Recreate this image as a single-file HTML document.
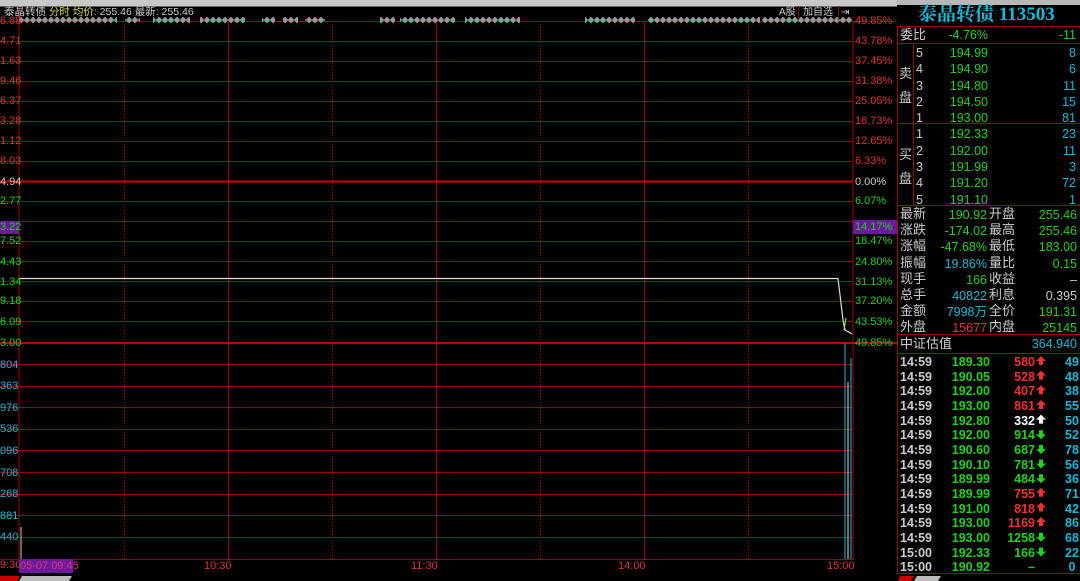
<!DOCTYPE html>
<html><head><meta charset="utf-8"><style>
body{margin:0;width:1080px;height:581px;background:#000;overflow:hidden;position:relative;font-family:"Liberation Sans","Noto Sans CJK SC",sans-serif;}
.a{position:absolute;white-space:nowrap;line-height:1;}
.l{font-size:11px;color:#d33;}
.r{text-align:right;}
.p{font-size:12.5px;}
.g{color:#1fd11f}.c{color:#1ab8d8}.w{color:#ccc}.rd{color:#f03030}
</style></head><body>
<div class="a" style="left:0;top:0;width:1080px;height:5px;background:#b8b8b8"></div>
<div class="a" style="left:0;top:0;width:897px;height:6px;background:#c8c8c8;border-bottom:1px solid #666"></div>
<svg class="a" style="left:0;top:0" width="1080" height="581">
<defs><pattern id="dm" x="0" y="0" width="6" height="8" patternUnits="userSpaceOnUse"><path d="M3 0.5L6.2 4 3 7.5 -0.2 4Z" fill="#909a9a"/></pattern></defs>
<g stroke="#a00000" stroke-width="1">
<line x1="19" y1="6" x2="19" y2="560"/>
<line x1="853" y1="21" x2="853" y2="560"/>
<line x1="228.5" y1="21" x2="228.5" y2="560"/><line x1="436.5" y1="21" x2="436.5" y2="560"/><line x1="644.5" y1="21" x2="644.5" y2="560"/>
<g stroke-dasharray="1,2"><line x1="124.5" y1="21" x2="124.5" y2="560"/><line x1="332.5" y1="21" x2="332.5" y2="560"/><line x1="540.5" y1="21" x2="540.5" y2="560"/><line x1="748.5" y1="21" x2="748.5" y2="560"/></g>
<line x1="0" y1="21.5" x2="897" y2="21.5"/>
<line x1="0" y1="41.5" x2="853" y2="41.5"/><line x1="0" y1="61.5" x2="853" y2="61.5"/><line x1="0" y1="81.5" x2="853" y2="81.5"/><line x1="0" y1="101.5" x2="853" y2="101.5"/><line x1="0" y1="121.5" x2="853" y2="121.5"/><line x1="0" y1="141.5" x2="853" y2="141.5"/><line x1="0" y1="161.5" x2="853" y2="161.5"/>
<line x1="0" y1="181.5" x2="853" y2="181.5" stroke="#d00000" stroke-width="2"/>
<line x1="0" y1="201.5" x2="853" y2="201.5"/><line x1="0" y1="221.5" x2="853" y2="221.5"/><line x1="0" y1="241.5" x2="853" y2="241.5"/><line x1="0" y1="261.5" x2="853" y2="261.5"/><line x1="0" y1="281.5" x2="853" y2="281.5"/><line x1="0" y1="301.5" x2="853" y2="301.5"/><line x1="0" y1="321.5" x2="853" y2="321.5"/>
<line x1="0" y1="343" x2="897" y2="343" stroke="#c00000" stroke-width="2"/>
<line x1="0" y1="364.5" x2="853" y2="364.5"/><line x1="0" y1="386.5" x2="853" y2="386.5"/><line x1="0" y1="407.5" x2="853" y2="407.5"/><line x1="0" y1="429.5" x2="853" y2="429.5"/><line x1="0" y1="450.5" x2="853" y2="450.5"/><line x1="0" y1="472.5" x2="853" y2="472.5"/><line x1="0" y1="494.5" x2="853" y2="494.5"/><line x1="0" y1="515.5" x2="853" y2="515.5"/><line x1="0" y1="537.5" x2="853" y2="537.5"/>
<line x1="0" y1="559.5" x2="853" y2="559.5"/>
<line x1="897.5" y1="26" x2="897.5" y2="574"/>
<line x1="897" y1="26.5" x2="1080" y2="26.5"/><line x1="897" y1="43.5" x2="1080" y2="43.5"/><line x1="897" y1="123.5" x2="1080" y2="123.5"/><line x1="897" y1="205.5" x2="1080" y2="205.5"/><line x1="897" y1="334.5" x2="1080" y2="334.5"/><line x1="897" y1="353.5" x2="1080" y2="353.5"/><line x1="897" y1="573.5" x2="1080" y2="573.5"/>
<line x1="913.5" y1="43" x2="913.5" y2="205"/>
</g>
<g fill="url(#dm)">
<rect x="19" y="17" width="98" height="8"/><rect x="125" y="17" width="15" height="8"/><rect x="153" y="17" width="37" height="8"/><rect x="200" y="17" width="45" height="8"/><rect x="262" y="17" width="13" height="8"/><rect x="283" y="17" width="15" height="8"/><rect x="305" y="17" width="20" height="8"/><rect x="380" y="17" width="15" height="8"/><rect x="400" y="17" width="55" height="8"/><rect x="465" y="17" width="55" height="8"/><rect x="585" y="17" width="50" height="8"/><rect x="648" y="17" width="112" height="8"/><rect x="762" y="17" width="90" height="8"/>
</g>
<polyline points="19,278.5 838,278.5 840,295 843,320 845,330 852,334" fill="none" stroke="#ddd" stroke-width="1.2"/>
<line x1="844" y1="330" x2="846" y2="318" stroke="#dd4" stroke-width="1"/>
<line x1="21" y1="527" x2="21" y2="559" stroke="#ccc"/>
<line x1="845" y1="343" x2="845" y2="559" stroke="#1ab8d8"/><line x1="848" y1="382" x2="848" y2="559" stroke="#ddd"/><line x1="851" y1="358" x2="851" y2="559" stroke="#1ab8d8"/>
<g fill="#f03030">
<path d="M1041 356l5 5h-3v4h-4v-4h-3z"/><path d="M1041 370.6l5 5h-3v4h-4v-4h-3z"/><path d="M1041 385.3l5 5h-3v4h-4v-4h-3z"/><path d="M1041 400l5 5h-3v4h-4v-4h-3z"/>
<path d="M1041 487.8l5 5h-3v4h-4v-4h-3z"/><path d="M1041 502.5l5 5h-3v4h-4v-4h-3z"/><path d="M1041 517l5 5h-3v4h-4v-4h-3z"/></g>
<path d="M1041 414.6l5 5h-3v4h-4v-4h-3z" fill="#fff"/>
<g fill="#1fd11f">
<path d="M1041 439.3l5-5h-3v-4h-4v4h-3z"/><path d="M1041 454l5-5h-3v-4h-4v4h-3z"/><path d="M1041 468.5l5-5h-3v-4h-4v4h-3z"/><path d="M1041 483.2l5-5h-3v-4h-4v4h-3z"/>
<path d="M1041 541.8l5-5h-3v-4h-4v4h-3z"/><path d="M1041 556.5l5-5h-3v-4h-4v4h-3z"/></g>
<path d="M900 576h14l-3 5h-13z" fill="#c00"/><path d="M917 576h24l-3 5h-24z" fill="#bbb"/>
<path d="M0 576h20l-3 5h-17z" fill="#c00"/><path d="M22 576h50l-3 5h-50z" fill="#bbb"/>
</svg>
<div class="a" style="left:4px;top:7px;font-size:10.5px;color:#ccc">泰晶转债 <span style="color:#dd4">分时 均价:</span> 255.46 最新: 255.46</div>
<div class="a" style="left:779px;top:6px;width:19px;height:14px;border-right:1px solid #800;font-size:10px;color:#ccc;line-height:14px">A股</div>
<div class="a" style="left:803px;top:6px;font-size:10px;color:#ccc;line-height:14px">加自选</div>
<div class="a" style="left:838px;top:6px;font-size:10px;color:#ccc;line-height:14px;border-left:1px solid #800;padding-left:2px">⇥</div>
<div class="a l" style="left:0;top:16px">6.88</div><div class="a l" style="left:0;top:36px">4.71</div><div class="a l" style="left:0;top:56px">1.63</div><div class="a l" style="left:0;top:76px">9.46</div><div class="a l" style="left:0;top:96px">6.37</div><div class="a l" style="left:0;top:116px">3.28</div><div class="a l" style="left:0;top:136px">1.12</div><div class="a l" style="left:0;top:156px">8.03</div>
<div class="a l" style="left:0;top:177px;color:#ccc">4.94</div>
<div class="a l g" style="left:0;top:196px">2.77</div><div class="a" style="left:0;top:221px;width:19px;height:13px;background:#6a1a9a"></div><div class="a l g" style="left:0;top:222px">3.22</div><div class="a l g" style="left:0;top:236px">7.52</div><div class="a l g" style="left:0;top:257px">4.43</div><div class="a l g" style="left:0;top:277px">1.34</div><div class="a l g" style="left:0;top:296px">9.18</div><div class="a l g" style="left:0;top:317px">6.09</div><div class="a l g" style="left:0;top:338px">3.00</div>
<div class="a l c" style="left:0;top:360px">804</div><div class="a l c" style="left:0;top:381px">363</div><div class="a l c" style="left:0;top:403px">976</div><div class="a l c" style="left:0;top:424px">536</div><div class="a l c" style="left:0;top:446px">096</div><div class="a l c" style="left:0;top:468px">708</div><div class="a l c" style="left:0;top:489px">268</div><div class="a l c" style="left:0;top:511px">881</div><div class="a l c" style="left:0;top:532px">440</div>
<div class="a l" style="left:0;top:560px">9:30</div>
<div class="a" style="left:19px;top:559px;width:54px;height:14px;background:#6a1a9a"></div>
<div class="a l" style="left:20px;top:561px;color:#e03080">05-07 09:45</div>
<div class="a l" style="left:204px;top:561px">10:30</div><div class="a l" style="left:411px;top:561px">11:30</div><div class="a l" style="left:618px;top:561px">14:00</div><div class="a l" style="left:827px;top:561px">15:00</div>
<div class="a l" style="left:855px;top:16px">49.85%</div><div class="a l" style="left:855px;top:36px">43.78%</div><div class="a l" style="left:855px;top:56px">37.45%</div><div class="a l" style="left:855px;top:76px">31.38%</div><div class="a l" style="left:855px;top:96px">25.05%</div><div class="a l" style="left:855px;top:116px">18.73%</div><div class="a l" style="left:855px;top:136px">12.65%</div><div class="a l" style="left:855px;top:156px">6.33%</div>
<div class="a l w" style="left:855px;top:177px">0.00%</div>
<div class="a l g" style="left:855px;top:196px">6.07%</div><div class="a" style="left:853px;top:220px;width:44px;height:14px;background:#6a1a9a"></div><div class="a l g" style="left:855px;top:222px">14.17%</div><div class="a l g" style="left:855px;top:236px">18.47%</div><div class="a l g" style="left:855px;top:257px">24.80%</div><div class="a l g" style="left:855px;top:277px">31.13%</div><div class="a l g" style="left:855px;top:296px">37.20%</div><div class="a l g" style="left:855px;top:317px">43.53%</div><div class="a l g" style="left:855px;top:338px">49.85%</div>
<div class="a" style="left:918px;top:5px;font-size:19px;font-weight:bold;color:#1ab8d8;font-family:'Liberation Serif','Noto Serif CJK SC',serif">泰晶转债 113503</div>
<div class="a p w" style="left:900px;top:28px;font-size:13px">委比</div><div class="a p g r" style="left:930px;top:29px;width:58px">-4.76%</div><div class="a p g r" style="left:1020px;top:29px;width:56px">-11</div>
<div class="a w" style="left:899px;top:62px;font-size:13px;line-height:24px;width:14px">卖<br>盘</div>
<div class="a w" style="left:899px;top:143px;font-size:13px;line-height:24px;width:14px">买<br>盘</div>
<div class="a p w" style="left:916px;top:45px;line-height:16.3px">5<br>4<br>3<br>2<br>1<br>1<br>2<br>3<br>4<br>5</div>
<div class="a p g r" style="left:938px;top:45px;width:50px;line-height:16.3px">194.99<br>194.90<br>194.80<br>194.50<br>193.00<br>192.33<br>192.00<br>191.99<br>191.20<br>191.10</div>
<div class="a p c r" style="left:1030px;top:45px;width:46px;line-height:16.3px">8<br>6<br>11<br>15<br>81<br>23<br>11<br>3<br>72<br>1</div>
<div class="a w" style="left:900px;top:206px;font-size:13px;line-height:16.2px">最新<br>涨跌<br>涨幅<br>振幅<br>现手<br>总手<br>金额<br>外盘</div>
<div class="a w" style="left:989px;top:206px;font-size:13px;line-height:16.2px">开盘<br>最高<br>最低<br>量比<br>收益<br>利息<br>全价<br>内盘</div>
<div class="a p r" style="left:918px;top:207px;width:69px;line-height:16.2px"><span class="g">190.92</span><br><span class="g">-174.02</span><br><span class="g">-47.68%</span><br><span class="c">19.86%</span><br><span class="g">166</span><br><span class="c">40822</span><br><span class="c">7998万</span><br><span class="rd">15677</span></div>
<div class="a p r" style="left:1008px;top:207px;width:69px;line-height:16.2px"><span class="g">255.46</span><br><span class="g">255.46</span><br><span class="g">183.00</span><br><span class="g">0.15</span><br><span class="w">–</span><br><span class="w">0.395</span><br><span class="g">191.31</span><br><span class="g">25145</span></div>
<div class="a w" style="left:900px;top:337px;font-size:13px">中证估值</div><div class="a p c r" style="left:1000px;top:338px;width:77px">364.940</div>
<div class="a p w" style="left:900px;top:355px;line-height:14.65px;font-weight:bold">14:59<br>14:59<br>14:59<br>14:59<br>14:59<br>14:59<br>14:59<br>14:59<br>14:59<br>14:59<br>14:59<br>14:59<br>14:59<br>15:00<br>15:00</div>
<div class="a p g r" style="left:938px;top:355px;width:52px;line-height:14.65px;font-weight:bold">189.30<br>190.05<br>192.00<br>193.00<br>192.80<br>192.00<br>190.60<br>190.10<br>189.99<br>189.99<br>191.00<br>193.00<br>193.00<br>192.33<br>190.92</div>
<div class="a p r" style="left:993px;top:355px;width:42px;line-height:14.65px;font-weight:bold"><span class="rd">580</span><br><span class="rd">528</span><br><span class="rd">407</span><br><span class="rd">861</span><br><span style="color:#fff">332</span><br><span class="g">914</span><br><span class="g">687</span><br><span class="g">781</span><br><span class="g">484</span><br><span class="rd">755</span><br><span class="rd">818</span><br><span class="rd">1169</span><br><span class="g">1258</span><br><span class="g">166</span><br><span class="g">–</span></div>
<div class="a p c" style="left:1065px;top:355px;line-height:14.65px;font-weight:bold">49<br>48<br>38<br>55<br>50<br>52<br>78<br>56<br>36<br>71<br>42<br>86<br>68<br>22<br>&nbsp;0</div>
</body></html>
